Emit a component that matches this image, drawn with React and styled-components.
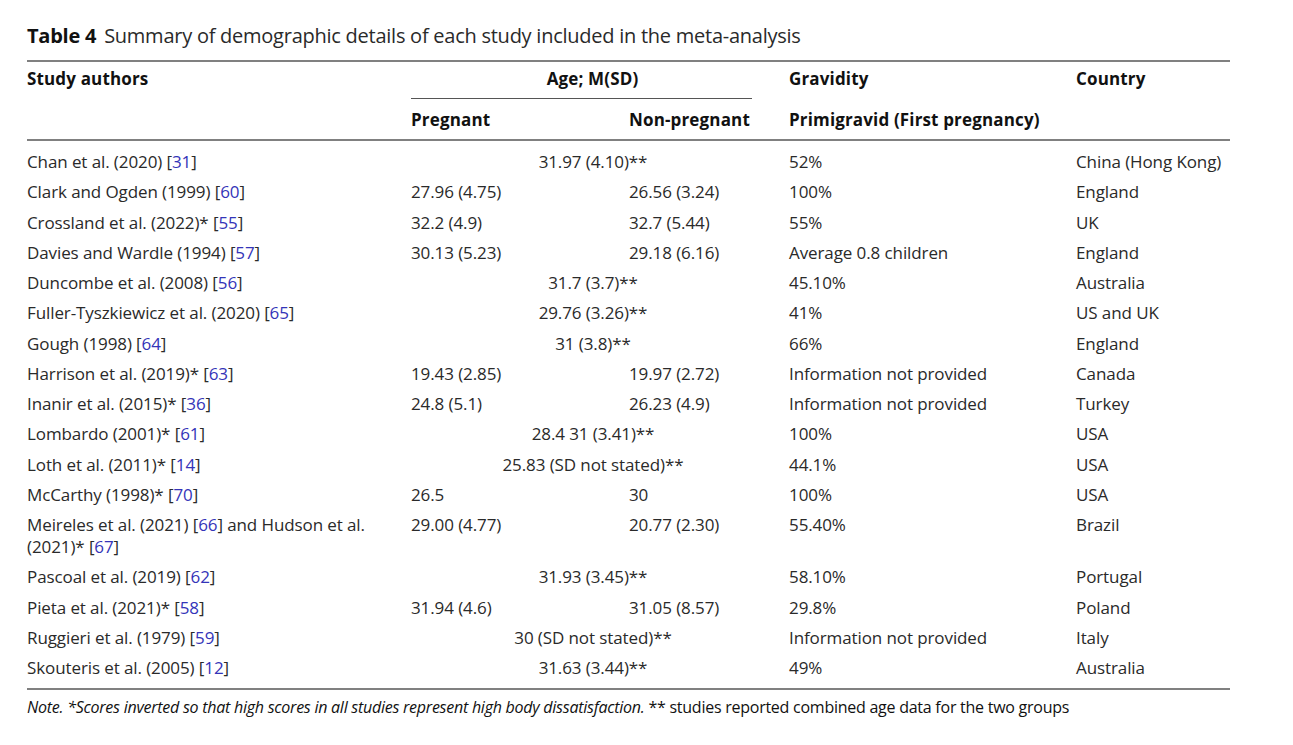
import React from "react";
import styled, { createGlobalStyle } from "styled-components";

const GlobalStyle = createGlobalStyle`
  body {
    margin: 0;
    background: #ffffff;
    font-family: "Open Sans", "Noto Sans", sans-serif;
    color: #222;
  }
`;

const rows = [
  { who: "Chan et al. (2020) ", ref: "31", all: "31.97 (4.10)**", grav: "52%", country: "China (Hong Kong)" },
  { who: "Clark and Ogden (1999) ", ref: "60", preg: "27.96 (4.75)", non: "26.56 (3.24)", grav: "100%", country: "England" },
  { who: "Crossland et al. (2022)* ", ref: "55", preg: "32.2 (4.9)", non: "32.7 (5.44)", grav: "55%", country: "UK" },
  { who: "Davies and Wardle (1994) ", ref: "57", preg: "30.13 (5.23)", non: "29.18 (6.16)", grav: "Average 0.8 children", country: "England" },
  { who: "Duncombe et al. (2008) ", ref: "56", all: "31.7 (3.7)**", grav: "45.10%", country: "Australia" },
  { who: "Fuller-Tyszkiewicz et al. (2020) ", ref: "65", all: "29.76 (3.26)**", grav: "41%", country: "US and UK" },
  { who: "Gough (1998) ", ref: "64", all: "31 (3.8)**", grav: "66%", country: "England" },
  { who: "Harrison et al. (2019)* ", ref: "63", preg: "19.43 (2.85)", non: "19.97 (2.72)", grav: "Information not provided", country: "Canada" },
  { who: "Inanir et al. (2015)* ", ref: "36", preg: "24.8 (5.1)", non: "26.23 (4.9)", grav: "Information not provided", country: "Turkey" },
  { who: "Lombardo (2001)* ", ref: "61", all: "28.4 31 (3.41)**", grav: "100%", country: "USA" },
  { who: "Loth et al. (2011)* ", ref: "14", all: "25.83 (SD not stated)**", grav: "44.1%", country: "USA" },
  { who: "McCarthy (1998)* ", ref: "70", preg: "26.5", non: "30", grav: "100%", country: "USA" },
  { who: "Meireles et al. (2021) ", ref: "66", extra: { who: " and Hudson et al. (2021)* ", ref: "67" }, preg: "29.00 (4.77)", non: "20.77 (2.30)", grav: "55.40%", country: "Brazil" },
  { who: "Pascoal et al. (2019) ", ref: "62", all: "31.93 (3.45)**", grav: "58.10%", country: "Portugal" },
  { who: "Pieta et al. (2021)* ", ref: "58", preg: "31.94 (4.6)", non: "31.05 (8.57)", grav: "29.8%", country: "Poland" },
  { who: "Ruggieri et al. (1979) ", ref: "59", all: "30 (SD not stated)**", grav: "Information not provided", country: "Italy" },
  { who: "Skouteris et al. (2005) ", ref: "12", all: "31.63 (3.44)**", grav: "49%", country: "Australia" },
];

export default function App() {
  return (
    <>
      <GlobalStyle />
      <Page>
        <Caption>
          <CaptionLabel>Table 4</CaptionLabel>Summary of demographic details of each study included in the meta-analysis
        </Caption>
        <Table>
          <colgroup>
            <col style={{ width: 384 }} />
            <col style={{ width: 218 }} />
            <col style={{ width: 160 }} />
            <col style={{ width: 287 }} />
            <col style={{ width: 154 }} />
          </colgroup>
          <thead>
            <HeadRow $top>
              <Th $top>Study authors</Th>
              <Th $top colSpan={2}>
                <SpanHead>Age; M(SD)</SpanHead>
              </Th>
              <Th $top>Gravidity</Th>
              <Th $top>Country</Th>
            </HeadRow>
            <HeadRow>
              <Th />
              <Th>Pregnant</Th>
              <Th $right>Non-pregnant</Th>
              <Th>Primigravid (First pregnancy)</Th>
              <Th />
            </HeadRow>
          </thead>
          <tbody>
            {rows.map((r, i) => (
              <Row key={i}>
                <Td $author>
                  {r.who}[<Ref>{r.ref}</Ref>]
                  {r.extra && (
                    <>
                      {r.extra.who}[<Ref>{r.extra.ref}</Ref>]
                    </>
                  )}
                </Td>
                {r.all ? (
                  <Td colSpan={2} $center>{r.all}</Td>
                ) : (
                  <>
                    <Td>{r.preg}</Td>
                    <Td>{r.non}</Td>
                  </>
                )}
                <Td>{r.grav}</Td>
                <Td>{r.country}</Td>
              </Row>
            ))}
          </tbody>
        </Table>
        <Note>
          <em>Note. *Scores inverted so that high scores in all studies represent high body dissatisfaction.</em> ** studies reported combined age data for the two groups
        </Note>
      </Page>
    </>
  );
}

const Page = styled.div`
  width: 1203px;
  padding: 22px 0 0 27px;
`;

const Caption = styled.div`
  font-size: 20px;
  line-height: 28px;
  color: #2a2a2a;
  padding-bottom: 10px;
  border-bottom: 2px solid #808080;
  letter-spacing: -0.25px;
`;

const CaptionLabel = styled.span`
  font-weight: 700;
  color: #111;
  margin-right: 8px;
`;

const Table = styled.table`
  width: 1203px;
  border-collapse: collapse;
  table-layout: fixed;
  font-size: 17px;
  letter-spacing: -0.1px;
`;

const HeadRow = styled.tr`
  height: ${(p) => (p.$top ? "38px" : "40px")};
  border-bottom: ${(p) => (p.$top ? "none" : "2px solid #808080")};
`;

const Th = styled.th`
  padding: ${(p) => (p.$right ? "0 37px 0 0" : p.$top ? "5px 0 0 0" : "0")};
  text-align: left;
  font-weight: 700;
  color: #111;
  vertical-align: ${(p) => (p.$top ? "top" : "middle")};
  white-space: nowrap;
  letter-spacing: 0.15px;
`;

const SpanHead = styled.div`
  margin-right: 37px;
  padding: 0 0 8px 22px;
  border-bottom: 1.5px solid #555;
  text-align: center;
`;

const Row = styled.tr`
  &:first-child td {
    padding-top: 10px;
  }
  &:last-child td {
    padding-bottom: 9px;
  }
  &:last-child {
    border-bottom: 2px solid #808080;
  }
`;

const Td = styled.td`
  padding: 4.125px 0;
  padding-right: ${(p) => (p.$author ? "40px" : p.$center ? "14px" : "0")};
  line-height: 22px;
  vertical-align: top;
  text-align: ${(p) => (p.$center ? "center" : "left")};
  color: #2a2a2a;
  white-space: ${(p) => (p.$author ? "normal" : "nowrap")};
`;

const Ref = styled.span`
  color: #3434b8;
`;

const Note = styled.div`
  font-size: 16px;
  line-height: 22px;
  padding-top: 6px;
  color: #111;
  letter-spacing: -0.25px;
`;
